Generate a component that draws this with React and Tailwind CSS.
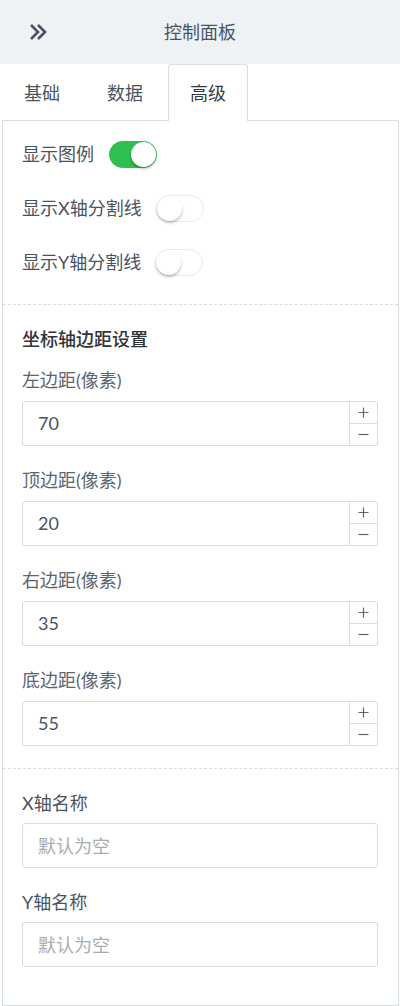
import { useState } from "react";

const font = { fontFamily: 'Lato, "Noto Sans CJK SC", "Noto Sans", sans-serif' };

function Toggle({ on, onChange }) {
    return (
        <button
            onClick={() => onChange(!on)}
            className={`relative w-[48px] h-[27px] rounded-full border transition-colors ${on ? "bg-[#2dbf4f] border-[#2dbf4f]" : "bg-white border-[#e6e9eb]"}`}
        >
            <span
                className={`absolute top-[0px] w-[25px] h-[25px] rounded-full bg-white shadow-[0_2px_3px_rgba(0,0,0,0.25)] ${on ? "left-[21px]" : "left-[0px]"}`}
            />
        </button>
    );
}

function NumberField({ label, value, onChange }) {
    return (
        <div className="flex flex-col">
            <div className="text-[18px] leading-[24px] text-[#5b6670] mb-[9px]">{label}</div>
            <div className="flex h-[45px] border border-[#d5dfe2] rounded-[3px] bg-white">
                <input
                    value={value}
                    onChange={(e) => onChange(e.target.value)}
                    className="flex-1 min-w-0 px-[15px] text-[18px] text-[#4a545d] outline-none bg-transparent"
                />
                <div className="w-[28px] flex flex-col border-l border-[#d5dfe2]">
                    <button
                        onClick={() => onChange(String(Number(value) + 1))}
                        className="flex-1 flex items-center justify-center border-b border-[#d5dfe2] text-[#5b6670]"
                    >
                        <svg width="11" height="11" viewBox="0 0 11 11">
                            <path d="M5.5 0.5v10M0.5 5.5h10" stroke="currentColor" strokeWidth="1.2" />
                        </svg>
                    </button>
                    <button
                        onClick={() => onChange(String(Number(value) - 1))}
                        className="flex-1 flex items-center justify-center text-[#5b6670]"
                    >
                        <svg width="11" height="11" viewBox="0 0 11 11">
                            <path d="M0.5 5.5h10" stroke="currentColor" strokeWidth="1.2" />
                        </svg>
                    </button>
                </div>
            </div>
        </div>
    );
}

function TextField({ label, placeholder }) {
    return (
        <div className="flex flex-col">
            <div className="text-[18px] leading-[24px] text-[#4a545d] mb-[8px]">{label}</div>
            <input
                placeholder={placeholder}
                className="h-[45px] border border-[#d5dfe2] rounded-[3px] px-[15px] text-[18px] text-[#4a545d] placeholder:text-[#a9adb0] outline-none"
            />
        </div>
    );
}

const App = () => {
    const [tab, setTab] = useState("高级");
    const [legend, setLegend] = useState(true);
    const [xSplit, setXSplit] = useState(false);
    const [ySplit, setYSplit] = useState(false);
    const [grid, setGrid] = useState({ left: "70", top: "20", right: "35", bottom: "55" });

    const tabs = ["基础", "数据", "高级"];

    return (
        <div className="w-[400px] h-[1006px] bg-white overflow-hidden flex flex-col" style={font}>
            {/* 상단 헤더 */}
            <div className="h-[64px] bg-[#eef2f4] flex items-center relative shrink-0">
                <button className="ml-[28px] text-[#48545f]">
                    <svg width="20" height="18" viewBox="0 0 20 18" fill="none">
                        <path d="M3 2l7 7-7 7M10 2l7 7-7 7" stroke="currentColor" strokeWidth="2.6" strokeLinejoin="miter" />
                    </svg>
                </button>
                <div className="absolute left-0 right-0 text-center text-[18px] text-[#48545f] pointer-events-none">控制面板</div>
            </div>

            {/* 탭 */}
            <div className="h-[57px] flex items-end pl-[2px] gap-[3px] shrink-0 relative z-10">
                {tabs.map((t) => (
                    <button
                        key={t}
                        onClick={() => setTab(t)}
                        className={`w-[80px] h-[56px] text-[18px] rounded-t-[3px] ${tab === t ? "border border-b-0 border-[#d5dfe2] bg-white text-[#333b42] h-[57px]" : "text-[#4a545d]"}`}
                    >
                        {t}
                    </button>
                ))}
            </div>

            {/* 패널 */}
            <div className="flex-1 ml-[2px] mr-[1px] border border-[#d5dfe2] -mt-[1px] bg-white">
                <div className="pl-[19px] pr-[20px] pt-[20px] pb-[28px] flex flex-col gap-[27px]">
                    <div className="flex items-center gap-[15px] h-[27px]">
                        <span className="text-[18px] text-[#4a545d]">显示图例</span>
                        <Toggle on={legend} onChange={setLegend} />
                    </div>
                    <div className="flex items-center gap-[14px] h-[27px]">
                        <span className="text-[18px] text-[#4a545d]">显示X轴分割线</span>
                        <Toggle on={xSplit} onChange={setXSplit} />
                    </div>
                    <div className="flex items-center gap-[14px] h-[27px]">
                        <span className="text-[18px] text-[#4a545d]">显示Y轴分割线</span>
                        <Toggle on={ySplit} onChange={setYSplit} />
                    </div>
                </div>

                <div className="border-t border-dashed border-[#d5dfe2]" />

                <div className="pl-[19px] pr-[20px] pt-[21px] pb-[22px] flex flex-col">
                    <div className="text-[18px] font-medium text-[#2f353a] leading-[26px] mb-[16px]">坐标轴边距设置</div>
                    <div className="flex flex-col gap-[22px]">
                        <NumberField label="左边距(像素)" value={grid.left} onChange={(v) => setGrid({ ...grid, left: v })} />
                        <NumberField label="顶边距(像素)" value={grid.top} onChange={(v) => setGrid({ ...grid, top: v })} />
                        <NumberField label="右边距(像素)" value={grid.right} onChange={(v) => setGrid({ ...grid, right: v })} />
                        <NumberField label="底边距(像素)" value={grid.bottom} onChange={(v) => setGrid({ ...grid, bottom: v })} />
                    </div>
                </div>

                <div className="border-t border-dashed border-[#d5dfe2]" />

                <div className="pl-[19px] pr-[20px] pt-[22px] flex flex-col gap-[22px]">
                    <TextField label="X轴名称" placeholder="默认为空" />
                    <TextField label="Y轴名称" placeholder="默认为空" />
                </div>
            </div>
        </div>
    );
};

export default App;
